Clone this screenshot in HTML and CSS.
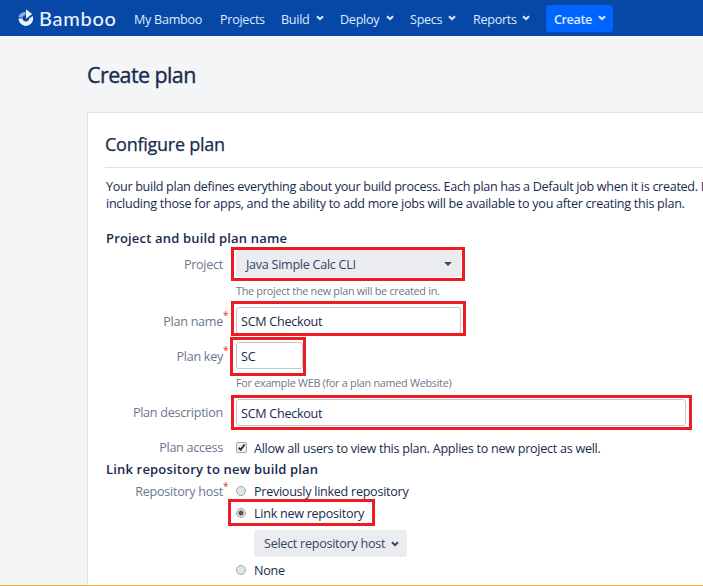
FILE: index.html
```html
<!DOCTYPE html>
<html lang="en">
<head>
<meta charset="utf-8">
<title>Create plan - Bamboo</title>
<link rel="stylesheet" href="styles.css">
</head>
<body>
<header class="nav">
  <a class="logo">
    <svg class="logo-mark" width="16" height="18" viewBox="0 0 16 18">
      <path class="fade" d="M.5 8.600C.8 5.300 3.400 3 7.600 2.700V6.200C5.600 6.400 4.700 7.200 4.500 8.600z"/>
      <path d="M8 .3v9.400l6.200-4.700z"/>
      <path d="M.5 9.600h4c.3 1.800 1.500 2.900 3.300 2.900s3.100-1.100 3.400-2.900L14.500 7c.5.800.7 1.700.7 2.600-.2 4.200-3.300 7.300-7.300 7.300S.8 13.800.5 9.600z"/>
    </svg>
    <span class="logo-text">Bamboo</span>
  </a>
  <nav class="menu">
    <a class="m1">My Bamboo</a>
    <a class="m2">Projects</a>
    <a class="m3">Build<svg class="chev" viewBox="0 0 8 6"><path d="M1 1.200l3 3 3-3"/></svg></a>
    <a class="m4">Deploy<svg class="chev" viewBox="0 0 8 6"><path d="M1 1.200l3 3 3-3"/></svg></a>
    <a class="m5">Specs<svg class="chev" viewBox="0 0 8 6"><path d="M1 1.200l3 3 3-3"/></svg></a>
    <a class="m6">Reports<svg class="chev" viewBox="0 0 8 6"><path d="M1 1.200l3 3 3-3"/></svg></a>
  </nav>
  <a class="create">Create<svg class="chev" viewBox="0 0 8 6"><path d="M1 1.200l3 3 3-3"/></svg></a>
</header>
<h1>Create plan</h1>
<main class="panel">
  <h2>Configure plan</h2>
  <p class="intro"><span class="lead">Your build plan defines everything about your build process. Each plan has a Default job when it is created. N</span><br>including those for apps, and the ability to add more jobs will be available to you after creating this plan.</p>
  <h3 class="h-name">Project and build plan name</h3>
  <div class="row project">
    <label>Project</label>
    <div class="field mark"><div class="select"><span>Java Simple Calc CLI</span><i class="caret"></i></div></div>
  </div>
  <p class="help help-project">The project the new plan will be created in.</p>
  <div class="row name">
    <label class="req">Plan name</label>
    <div class="field mark"><div class="input">SCM Checkout</div></div>
  </div>
  <div class="row key">
    <label class="req">Plan key</label>
    <div class="field mark"><div class="input">SC</div></div>
  </div>
  <p class="help help-key">For example WEB (for a plan named Website)</p>
  <div class="row desc">
    <label>Plan description</label>
    <div class="field mark"><div class="input">SCM Checkout</div></div>
  </div>
  <div class="row access">
    <label>Plan access</label>
    <div class="choice"><svg class="check" viewBox="0 0 11 11"><rect x=".5" y=".5" width="10" height="10" rx="1.500"/><path d="M2.600 5.600l2 2.200 4-5.300"/></svg><span>Allow all users to view this plan. Applies to new project as well.</span></div>
  </div>
  <h3 class="h-repo">Link repository to new build plan</h3>
  <div class="row prev">
    <label class="req">Repository host</label>
    <div class="choice"><i class="radio"></i><span>Previously linked repository</span></div>
  </div>
  <div class="row link">
    <div class="choice mark"><i class="radio on"></i><span>Link new repository</span></div>
  </div>
  <div class="repo-select"><span>Select repository host</span><svg class="chev" viewBox="0 0 8 6"><path d="M1 1.200l3 3 3-3"/></svg></div>
  <div class="row none">
    <div class="choice"><i class="radio"></i><span>None</span></div>
  </div>
</main>
<div class="edge"></div>
</body>
</html>
```
FILE: styles.css
```css
*, *::after { box-sizing: border-box; }
body {
  margin: 0;
  width: 703px;
  height: 586px;
  overflow: hidden;
  display: flex;
  flex-direction: column;
  background: #f4f5f7;
  color: #172b4d;
  font: 12.6px/17px "Open Sans", "Noto Sans", sans-serif;
  letter-spacing: -.28px;
  white-space: nowrap;
}
h1, h2, h3, p { margin: 0; }
.nav {
  flex: none;
  height: 36px;
  display: flex;
  align-items: center;
  padding-left: 18px;
  background: #0747a6;
  color: #deebff;
}
.logo { display: flex; align-items: center; width: 116px; height: 36px; color: #eaf1fc; }
.logo-mark { fill: #eaf1fc; margin-right: 5px; flex: none; }
.logo-mark .fade { opacity: .6; }
.logo-text { font: 500 20px/34px Lato, sans-serif; letter-spacing: .7px; }
.menu { display: flex; line-height: 36px; padding-top: 3px; }
.menu a { display: flex; align-items: center; justify-content: space-between; }
.m1 { width: 68px; margin-right: 18px; }
.m2 { width: 44px; margin-right: 17px; }
.m3 { width: 43px; margin-right: 16px; }
.m4 { width: 54px; margin-right: 16px; }
.m5 { width: 46px; margin-right: 17px; }
.m6 { width: 57px; margin-right: 16px; }
.chev { width: 8px; height: 6px; flex: none; fill: none; stroke: currentColor; stroke-width: 2; }
.menu .chev { margin-top: -3px; }
.create {
  width: 67px; height: 27px; padding: 2px 7px 0 8px;
  display: flex; align-items: center; justify-content: space-between;
  background: #0065ff; border-radius: 3px; font-weight: 600; letter-spacing: -.4px;
}
.create .chev { margin-top: -3px; }
h1 {
  flex: none; margin: 24px 0 0 87px; height: 52px; font-size: 21.5px; line-height: 30px; font-weight: 400;
  letter-spacing: -.6px; -webkit-text-stroke: .35px;
}
.panel {
  flex: none;
  margin-left: 87px;
  width: 616px;
  height: 473px;
  padding: 18px 0 0 17px;
  border: 1px solid #dfe1e5;
  border-width: 1px 0 0 1px;
  border-radius: 3px 0 0 0;
  background: #fff;
}
h2 {
  height: 37px; font-size: 18px; line-height: 26px; font-weight: 400; border-bottom: 1px solid #dfe1e5;
  letter-spacing: -.25px; -webkit-text-stroke: .25px;
}
.intro { margin-top: 10px; height: 34px; padding-left: 1px; overflow: hidden; }
.lead { letter-spacing: -.31px; }
h3 { padding-left: 1px; font-size: 13px; line-height: 18px; font-weight: 600; letter-spacing: .17px; }
.h-name { margin-top: 17px; }
.row { display: grid; grid-template-columns: 118px 1fr; column-gap: 13px; height: 27px; line-height: 27px; }
.row label { position: relative; top: 1px; justify-self: end; color: #6b778c; }
.req::after { content: "*"; position: absolute; left: 100%; top: -6px; color: #de350b; font-size: 10px; }
.mark { position: relative; }
.mark::after { content: ""; position: absolute; border: 3px solid #ed1c24; }
.select {
  display: flex; align-items: center; justify-content: space-between;
  height: 27px; padding: 2px 9px 0 10px; background: #ebecf0; border-radius: 3px; color: #344563;
}
.caret { margin-top: -2px; border: 4px solid transparent; border-top-color: #344563; border-bottom: 0; }
.input { height: 27px; padding-left: 4px; line-height: 27px; border: 1px solid #c1c7d0; border-radius: 3px; }
.help { margin-left: 131px; color: #6b778c; font-size: 10.8px; line-height: 16px; letter-spacing: -.27px; }
.project { margin-top: 3px; }
.project .field { width: 225px; }
.project .mark::after { left: -5px; top: -3px; width: 234px; height: 34px; }
.help-project { margin-top: 6px; }
.name { margin-top: 8px; }
.name .field { width: 225px; }
.name .mark::after { left: -5px; top: -6px; width: 235px; height: 35px; }
.key { margin-top: 8px; }
.key .field { width: 67px; }
.key .mark::after { left: -6px; top: -5px; width: 76px; height: 39px; }
.help-key { margin-top: 6px; }
.desc { margin-top: 8px; }
.desc label { top: 0; }
.desc .field { width: 450px; }
.desc .mark::after { left: -5px; top: -4px; width: 461px; height: 35px; }
.choice { display: flex; align-items: center; grid-column: 2; }
.choice span { margin-left: 7px; padding-top: 2px; }
.access { height: 20px; line-height: 20px; margin-top: 11px; }
.check { width: 11px; height: 11px; margin-top: -1px; fill: #f0f0f0; stroke: #a8a8a8; flex: none; }
.check path { fill: none; stroke: #333; stroke-width: 2; }
.radio { width: 10px; height: 10px; margin: -1px 1px 0 0; border: 1px solid #a8a8a8; border-radius: 50%; background: #e4e4e4; flex: none; }
.radio.on { background: radial-gradient(circle, #555 0 2.200px, #e4e4e4 2.900px); }
.h-repo { margin-top: 3px; }
.prev, .link, .none { height: 22px; line-height: 20px; }
.prev { margin-top: 2px; }
.prev label { top: 2px; }
.link .choice { width: 139px; }
.link .mark::after { left: -8px; top: -3px; width: 147px; height: 27px; }
.repo-select {
  display: flex; align-items: center; justify-content: space-between;
  width: 153px; height: 27px; margin: 6px 0 2px 149px; padding: 0 8px 0 10px;
  background: #ebecf0; border-radius: 3px; color: #344563;
}
.edge { flex: none; height: 1px; background: #f5b324; }
```
